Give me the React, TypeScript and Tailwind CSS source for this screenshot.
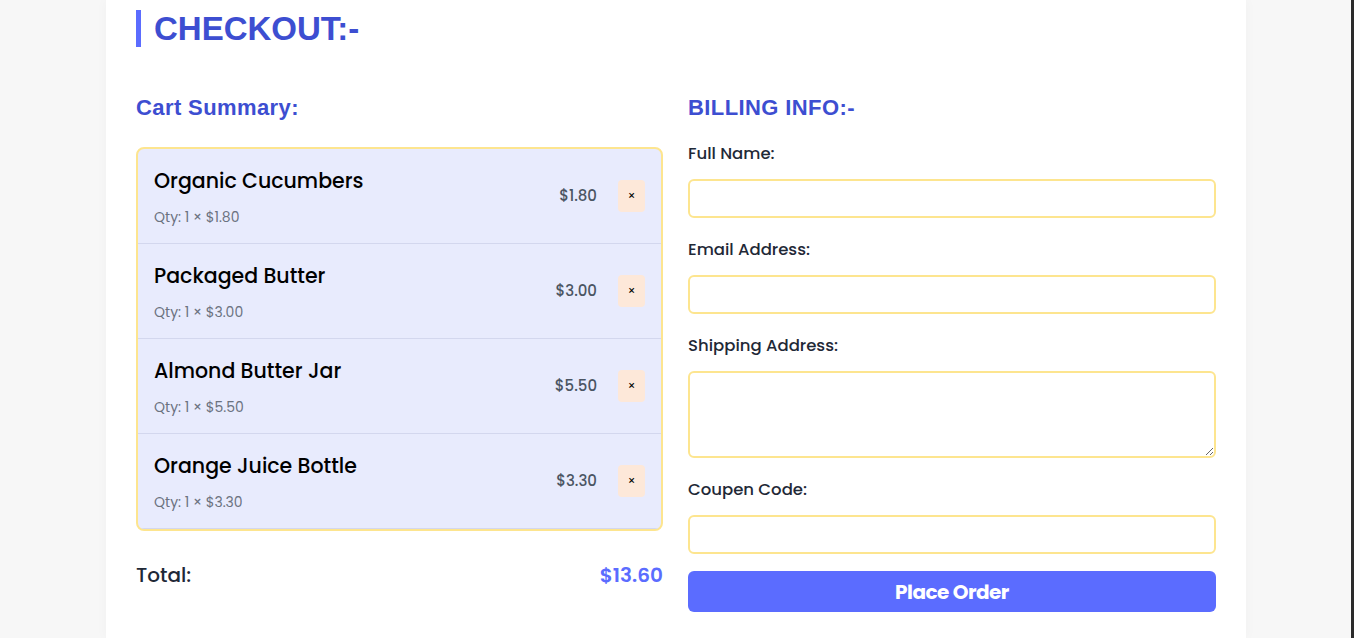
import React from 'react';

type CartItem = { id: number; name: string; qty: number; price: number };

const items: CartItem[] = [
  { id: 1, name: 'Organic Cucumbers', qty: 1, price: 1.8 },
  { id: 2, name: 'Packaged Butter', qty: 1, price: 3.0 },
  { id: 3, name: 'Almond Butter Jar', qty: 1, price: 5.5 },
  { id: 4, name: 'Orange Juice Bottle', qty: 1, price: 3.3 },
];

const fieldClass =
  'w-full h-[39px] rounded-md border-2 border-[#fde58f] bg-white outline-none px-3';
const labelClass = 'text-[16.5px] leading-[22px] font-medium text-[#1f2937]';

const App: React.FC = () => {
  const total = items.reduce((sum, i) => sum + i.qty * i.price, 0);

  return (
    <div className="min-h-[638px] bg-[#f7f7f7] flex font-['Poppins','Inter',sans-serif]">
      <div className="w-[106px] shrink-0" />

      {/* Checkout card */}
      <div className="w-[1140px] shrink-0 bg-white px-[30px] pt-[10px] pb-[26px] shadow-[0_0_12px_rgba(0,0,0,0.03)]">
        <h1 className="border-l-[5px] border-[#5b6cff] pl-[13px] h-[37px] flex items-center text-[33px] font-bold text-[#3d4ed1] font-['Liberation_Sans',Arial,sans-serif] leading-none">
          CHECKOUT:-
        </h1>

        <div className="flex gap-[25px] mt-[47px]">
          {/* Cart summary */}
          <div className="w-[527px] shrink-0">
            <h2 className="text-[22px] leading-[28px] font-bold text-[#3d4ed1] font-['Liberation_Sans',Arial,sans-serif] tracking-[0.4px]">
              Cart Summary:
            </h2>

            <div className="mt-[25px] rounded-lg border-2 border-[#fde58f] bg-[#e8ebfd] overflow-hidden">
              {items.map((item) => (
                <div
                  key={item.id}
                  className="flex items-center justify-between px-4 py-[18px] border-b border-[#d3d7ee] h-[95px]"
                >
                  <div>
                    <div className="text-[20.5px] leading-[28px] font-medium text-black">{item.name}</div>
                    <div className="mt-[13px] text-[14px] leading-[18px] text-[#6b7280]">
                      Qty: {item.qty} × ${item.price.toFixed(2)}
                    </div>
                  </div>
                  <div className="flex items-center gap-[21px]">
                    <span className="text-[15px] font-medium text-[#4b5563]">
                      ${(item.qty * item.price).toFixed(2)}
                    </span>
                    <button className="w-[27px] h-[32px] rounded bg-[#fde8d9] text-[12px] text-black flex items-center justify-center">
                      ×
                    </button>
                  </div>
                </div>
              ))}
            </div>

            <div className="flex items-center justify-between mt-[30px] text-[20px] leading-[28px]">
              <span className="font-medium text-[#1f2937]">Total:</span>
              <span className="font-semibold text-[#5b6cff]">${total.toFixed(2)}</span>
            </div>
          </div>

          {/* Billing info */}
          <div className="w-[528px] shrink-0">
            <h2 className="text-[22px] leading-[28px] font-bold text-[#3d4ed1] font-['Liberation_Sans',Arial,sans-serif] tracking-[0.4px]">
              BILLING INFO:-
            </h2>

            <form className="mt-[21px] flex flex-col">
              <label className={labelClass}>Full Name:</label>
              <input className={`${fieldClass} mt-[14px]`} />

              <label className={`${labelClass} mt-[21px]`}>Email Address:</label>
              <input className={`${fieldClass} mt-[14px]`} />

              <label className={`${labelClass} mt-[21px]`}>Shipping Address:</label>
              <textarea className="mt-[14px] w-full h-[87px] rounded-md border-2 border-[#fde58f] bg-white outline-none px-3 py-2" />

              <label className={`${labelClass} mt-[21px]`}>Coupen Code:</label>
              <input className={`${fieldClass} mt-[14px]`} />

              <button
                type="button"
                className="mt-[17px] h-[41px] w-full rounded-md bg-[#5b6cff] text-white text-[20px] font-bold tracking-[-0.5px]"
              >
                Place Order
              </button>
            </form>
          </div>
        </div>
      </div>

      <div className="flex-1" />
      <div className="w-[3px] shrink-0 bg-[#2b2b2b]" />
    </div>
  );
};

export default App;
